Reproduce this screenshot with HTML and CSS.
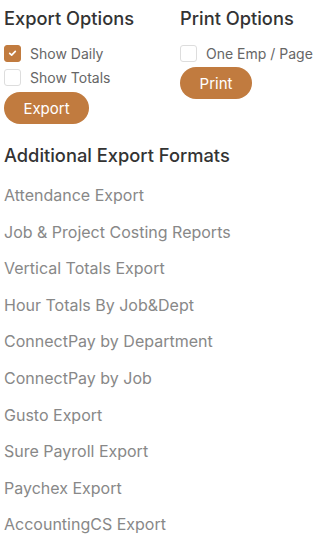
FILE: index.html
```html
<!DOCTYPE html>
<html>
<head>
<meta charset="utf-8">
<link rel="stylesheet" href="styles.css">
</head>
<body>
<div class="top">
  <section class="col col-export">
    <h2 class="heading">Export Options</h2>
    <label class="check"><span class="box on"><svg viewBox="0 0 16 16" width="16" height="16"><path d="M5 8.3 L7.1 10.3 L11 6.2" fill="none" stroke="#fff" stroke-width="1.8" stroke-linecap="round" stroke-linejoin="round"/></svg></span><span class="label">Show Daily</span></label>
    <label class="check"><span class="box"></span><span class="label">Show Totals</span></label>
    <button class="btn btn-export">Export</button>
  </section>
  <section class="col col-print">
    <h2 class="heading">Print Options</h2>
    <label class="check"><span class="box"></span><span class="label">One Emp / Page</span></label>
    <button class="btn btn-print">Print</button>
  </section>
</div>
<h2 class="heading formats">Additional Export Formats</h2>
<ul class="list">
  <li>Attendance Export</li>
  <li>Job &amp; Project Costing Reports</li>
  <li>Vertical Totals Export</li>
  <li>Hour Totals By Job&amp;Dept</li>
  <li>ConnectPay by Department</li>
  <li>ConnectPay by Job</li>
  <li>Gusto Export</li>
  <li>Sure Payroll Export</li>
  <li>Paychex Export</li>
  <li>AccountingCS Export</li>
</ul>
</body>
</html>
```
FILE: styles.css
```css
html, body { margin: 0; padding: 0; background: #fff; }
body {
  font-family: "Inter", "Liberation Sans", sans-serif;
  padding: 8px 4px 0 4px;
  color: #333;
}
.top { display: flex; }
.col { flex: none; white-space: nowrap; }
.col-export { width: 176px; }
.heading {
  margin: 0;
  font-size: 18.3px;
  font-weight: 500;
  color: #333;
  line-height: 21px;
}
.check {
  display: flex;
  align-items: center;
  height: 24px;
  gap: 9px;
}
.col .heading + .check { margin-top: 12px; }
.box {
  width: 17px; height: 17px;
  box-sizing: border-box;
  border: 1px solid #ddd;
  border-radius: 3px;
  display: flex;
  align-items: center;
  justify-content: center;
  flex: none;
}
.box.on { background: #c17b3f; border-color: #c17b3f; }
.label { font-size: 14px; color: #666; }
.btn {
  border: none;
  background: #c17b3f;
  color: #fff;
  font-family: inherit;
  font-size: 15px;
  border-radius: 16px;
  height: 32px;
  padding: 0;
  margin-top: 3px;
  display: block;
}
.btn-export { width: 85px; }
.btn-print { width: 72px; margin-top: 2px; }
.formats { margin-top: 21px; }
.list { list-style: none; margin: 11px 0 0 0; padding: 0; }
.list li {
  font-size: 16px;
  color: #888;
  height: 36.6px;
  line-height: 36.6px;
}
```
